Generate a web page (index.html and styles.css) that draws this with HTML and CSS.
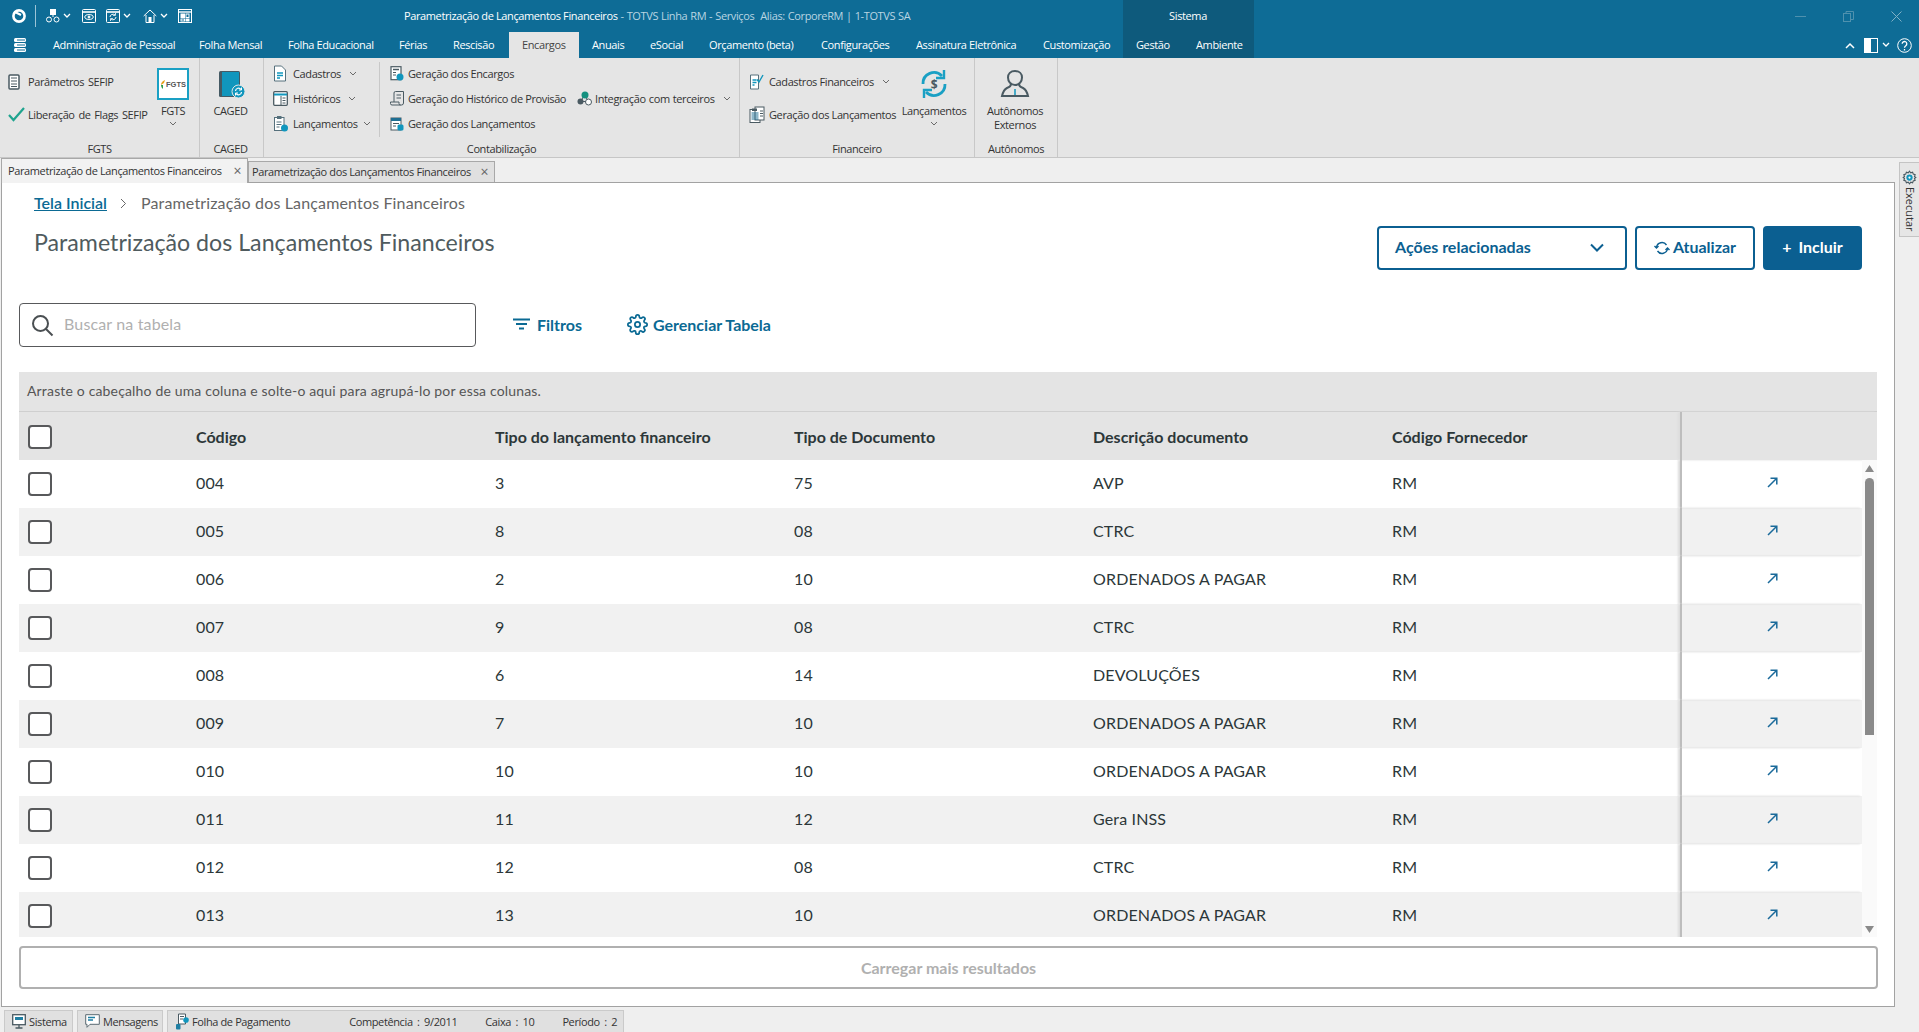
FILE: index.html
```html
<!DOCTYPE html>
<html lang="pt-BR">
<head>
<meta charset="utf-8">
<title>Parametrização de Lançamentos Financeiros</title>
<link rel="stylesheet" href="styles.css">
</head>
<body>
<header class="titlebar">
  <div class="quick">
    <svg width="16" height="16" viewBox="0 0 16 16"><circle cx="8" cy="8" r="5.6" fill="none" stroke="#fff" stroke-width="2.6"/><path d="M4 4l6 3" stroke="#fff" stroke-width="2"/></svg>
    <span class="q-sep"></span>
    <svg width="14" height="14" viewBox="0 0 14 14" fill="none" stroke="#fff"><rect x="4.5" y=".5" width="5" height="5" fill="#fff"/><circle cx="3" cy="10.5" r="2.5"/><circle cx="10.5" cy="10.5" r="2.5"/><path d="M7 5v3"/></svg>
    <svg class="chev" width="8" height="6" viewBox="0 0 8 6" fill="none" stroke="#fff" stroke-width="1.3"><path d="M1 1l3 3 3-3"/></svg>
    <svg class="q-gap" width="14" height="14" viewBox="0 0 14 14" fill="none" stroke="#fff"><rect x=".5" y=".5" width="13" height="13" rx="1"/><path d="M1 3h12" stroke-width="1.6"/><ellipse cx="7" cy="8" rx="4.2" ry="2.4"/><circle cx="7" cy="8" r="1" fill="#fff"/></svg>
    <svg class="q-gap2" width="14" height="14" viewBox="0 0 14 14" fill="none" stroke="#fff"><rect x=".5" y=".5" width="13" height="13" rx="1"/><path d="M1 3h12" stroke-width="1.6"/><path d="M4 8a3 3 0 0 1 5-2M10 8a3 3 0 0 1-5 2"/><path d="M9.5 4v2.400H7M4.500 12v-2.400H7" stroke-width=".8"/></svg>
    <svg class="chev" width="8" height="6" viewBox="0 0 8 6" fill="none" stroke="#fff" stroke-width="1.3"><path d="M1 1l3 3 3-3"/></svg>
    <svg class="q-gap3" width="14" height="14" viewBox="0 0 14 14" fill="none" stroke="#fff"><path d="M.7 7L7 1l6.300 6M3 6v7.500h8V6"/><rect x="5.500" y="8" width="3" height="5.500" fill="#fff" stroke="none"/></svg>
    <svg class="chev" width="8" height="6" viewBox="0 0 8 6" fill="none" stroke="#fff" stroke-width="1.3"><path d="M1 1l3 3 3-3"/></svg>
    <svg class="q-gap2" width="14" height="14" viewBox="0 0 14 14" fill="none" stroke="#fff"><rect x=".5" y=".5" width="13" height="13"/><path d="M1 3h12" stroke-width="1.400"/><rect x="3" y="5" width="3.500" height="3.500" fill="#fff"/><rect x="8" y="5" width="3" height="3.500"/><rect x="3" y="10" width="3.500" height="2"/><rect x="8" y="10" width="3" height="2" fill="#fff"/></svg>
  </div>
  <div class="doc-title"><b>Parametrização de Lançamentos Financeiros</b> - TOTVS Linha RM - Serviços&nbsp; Alias: CorporeRM | 1-TOTVS SA</div>
  <div class="context-name">Sistema</div>
  <div class="win-ctrls">
    <svg width="11" height="11" viewBox="0 0 11 11" stroke="#4f91ae" fill="none"><path d="M0 5.500h11"/></svg>
    <svg width="11" height="11" viewBox="0 0 11 11" stroke="#4f91ae" fill="none"><rect x=".5" y="2.500" width="7" height="8"/><path d="M3 2.500V.5h7.500v8h-3"/></svg>
    <svg width="11" height="11" viewBox="0 0 11 11" stroke="#7fb0c6" fill="none"><path d="M.5.5l10 10M10.500.5l-10 10"/></svg>
  </div>
</header>

<nav class="menubar">
  <div class="app-menu">
    <svg width="14" height="16" viewBox="0 0 14 16" fill="#fff"><rect x="1" y="1" width="12" height="4" rx="1.500"/><rect x="1" y="6" width="12" height="4" rx="1.500"/><rect x="1" y="11" width="12" height="4" rx="1.500"/><path d="M4 3h8M4 8h8M4 13h8" stroke="#0e6c96"/></svg>
  </div>
  <div class="tabs">
    <a class="tab">Administração de Pessoal</a>
    <a class="tab">Folha Mensal</a>
    <a class="tab">Folha Educacional</a>
    <a class="tab">Férias</a>
    <a class="tab">Rescisão</a>
    <a class="tab tab-on">Encargos</a>
    <a class="tab">Anuais</a>
    <a class="tab">eSocial</a>
    <a class="tab">Orçamento (beta)</a>
    <a class="tab">Configurações</a>
    <a class="tab">Assinatura Eletrônica</a>
    <a class="tab">Customização</a>
    <a class="tab tab-ctx">Gestão</a>
    <a class="tab tab-ctx">Ambiente</a>
  </div>
  <div class="menu-tools">
    <svg width="10" height="7" viewBox="0 0 10 7" fill="none" stroke="#fff" stroke-width="1.500"><path d="M1 6l4-4 4 4"/></svg>
    <svg class="t-panel" width="14" height="15" viewBox="0 0 14 15"><rect x=".5" y=".5" width="13" height="14" fill="none" stroke="#fff"/><rect x="1" y="1" width="6" height="13" fill="#fff"/></svg>
    <svg width="8" height="6" viewBox="0 0 8 6" fill="none" stroke="#fff" stroke-width="1.300"><path d="M1 1l3 3 3-3"/></svg>
    <svg class="t-help" width="15" height="15" viewBox="0 0 15 15" fill="none" stroke="#fff"><circle cx="7.500" cy="7.500" r="6.800"/><path d="M5.200 5.800a2.300 2.300 0 1 1 3.600 1.900c-.9.600-1.300 1-1.300 2.100" stroke-width="1.300"/><path d="M7.500 11v1.500" stroke-width="1.300"/></svg>
  </div>
</nav>

<section class="ribbon">
  <div class="group g-fgts">
    <div class="g-body">
      <div class="small-col s-fgts">
        <div class="item tall"><span class="slot"><svg width="12" height="16" viewBox="0 0 12 16"><rect x="1" y="1" width="10" height="14" rx="1" fill="#fff" stroke="#4a5a62" stroke-width="1.500"/><path d="M3 4h6M3 7h6M3 10h6M3 12.500h6" stroke="#4a5a62"/></svg></span>Parâmetros SEFIP</div>
        <div class="item tall"><span class="slot"><svg width="17" height="15" viewBox="0 0 17 15" fill="none" stroke="#1fa48f" stroke-width="2.200"><path d="M1 8l4.500 5L16 1"/></svg></span>Liberação de Flags SEFIP</div>
      </div>
      <div class="big b-fgts">
        <span class="fgts-logo"><svg width="6" height="11" viewBox="0 0 6 11"><path d="M5 1C2 2 1 4 1 6l3-2z" fill="#e8a11c"/><path d="M1 6c0 2 1 3 2 4V6z" fill="#2e9e4f"/></svg><span class="fgts-text">FGTS</span></span>
        <span class="big-label">FGTS</span>
        <svg class="r-chev" width="8" height="6" viewBox="0 0 8 6" fill="none" stroke="#6a6a6a"><path d="M1 1l3 3 3-3"/></svg>
      </div>
    </div>
    <div class="g-label">FGTS</div>
  </div>

  <div class="group g-caged">
    <div class="g-body">
      <div class="big b-caged">
        <span class="big-icon"><svg width="30" height="30" viewBox="0 0 30 30"><rect x="3" y="2" width="21" height="26" rx="1.500" fill="#455a64"/><rect x="6" y="3" width="17" height="24" fill="#1196bd"/><circle cx="22.500" cy="22.500" r="6.500" fill="#1196bd" stroke="#e5e5e5"/><path d="M19.500 22a3 3 0 0 1 5.500-1.500M25.500 23a3 3 0 0 1-5.500 1.500" fill="none" stroke="#fff" stroke-width="1.200"/><path d="M25.500 18.500v2.500h-2.500M19.500 26.500V24h2.500" fill="none" stroke="#fff"/></svg></span>
        <span class="big-label">CAGED</span>
      </div>
    </div>
    <div class="g-label">CAGED</div>
  </div>

  <div class="group g-cont">
    <div class="g-body">
      <div class="small-col s-c1">
        <div class="item"><span class="slot"><svg width="14" height="17" viewBox="0 0 14 17"><path d="M1.500 1h7l4 4v11h-11z" fill="#fff" stroke="#56707c"/><path d="M4 8h6M4 10.500h6M4 13h3" stroke="#1196bd" stroke-width="1.300"/></svg></span>Cadastros<svg class="chev-s" width="8" height="6" viewBox="0 0 8 6" fill="none" stroke="#6a6a6a"><path d="M1 1l3 3 3-3"/></svg></div>
        <div class="item"><span class="slot"><svg width="15" height="15" viewBox="0 0 15 15"><rect x=".7" y=".7" width="13.600" height="13.600" rx="1" fill="#fff" stroke="#4a5a62" stroke-width="1.300"/><path d="M1 3.500h13" stroke="#1196bd" stroke-width="2"/><path d="M8 5v9M9.500 7h3M9.500 9.500h3M9.500 12h3" stroke="#4a5a62"/></svg></span>Históricos<svg class="chev-s" width="8" height="6" viewBox="0 0 8 6" fill="none" stroke="#6a6a6a"><path d="M1 1l3 3 3-3"/></svg></div>
        <div class="item"><span class="slot"><svg width="15" height="17" viewBox="0 0 15 17"><rect x="1.500" y="2.500" width="9.500" height="13" fill="#fff" stroke="#56707c"/><rect x="4" y="1" width="4.500" height="3" fill="#56707c"/><path d="M3.500 7h5M3.500 9.500h5M3.500 12h3" stroke="#56707c"/><circle cx="11.500" cy="13" r="3.500" fill="#1196bd"/></svg></span>Lançamentos<svg class="chev-s c3" width="8" height="6" viewBox="0 0 8 6" fill="none" stroke="#6a6a6a"><path d="M1 1l3 3 3-3"/></svg></div>
      </div>
      <span class="v-sep"></span>
      <div class="small-col s-c2">
        <div class="item"><span class="slot s18"><svg width="14" height="15" viewBox="0 0 14 15"><rect x="1" y=".7" width="10" height="13" fill="#fff" stroke="#4a5a62" stroke-width="1.200"/><path d="M3 3.500h6" stroke="#4a5a62" stroke-width="1.500"/><path d="M3 6.500h3M3 9h3" stroke="#4a5a62"/><circle cx="10" cy="11" r="3.500" fill="#1196bd"/></svg></span>Geração dos Encargos</div>
        <div class="item"><span class="slot s18"><svg width="14" height="15" viewBox="0 0 14 15" fill="none" stroke="#4a5a62"><path d="M4 11V2a1.500 1.500 0 0 1 1.500-1.500h8V12a2 2 0 0 1-2 2H2a1.500 1.500 0 0 1-1.500-1.500V11H9v1.500a1.500 1.500 0 0 0 1.500 1.500"/><path d="M6.500 4h4.500M6.500 7h4.500"/></svg></span>Geração do Histórico de Provisão</div>
        <div class="item"><span class="slot s18"><svg width="14" height="14" viewBox="0 0 14 14"><rect x="1" y="1" width="10" height="12" fill="#fff" stroke="#4a5a62"/><rect x="1" y="1" width="10" height="3" fill="#1f6f93"/><path d="M3 6.500h6M3 9h3" stroke="#4a5a62"/><rect x="7.500" y="7.500" width="6" height="6" rx="1.500" fill="#1196bd"/></svg></span>Geração dos Lançamentos</div>
      </div>
      <div class="small-col s-c3">
        <div class="item"><span class="slot s18"><svg width="15" height="15" viewBox="0 0 15 15"><path d="M7.500 4L3.500 10.500h8z" fill="none" stroke="#4a5a62"/><circle cx="8" cy="4" r="3.500" fill="#14907f"/><circle cx="3.500" cy="10.500" r="3" fill="#4a5a62"/><circle cx="11.500" cy="11" r="3" fill="#fff" stroke="#4a5a62"/></svg></span>Integração com terceiros<svg class="chev-s" width="8" height="6" viewBox="0 0 8 6" fill="none" stroke="#6a6a6a"><path d="M1 1l3 3 3-3"/></svg></div>
      </div>
    </div>
    <div class="g-label">Contabilização</div>
  </div>

  <div class="group g-fin">
    <div class="g-body">
      <div class="small-col s-fin">
        <div class="item tall"><span class="slot"><svg width="15" height="17" viewBox="0 0 15 17"><path d="M1.500 2h8v14h-8z" fill="#fff" stroke="#56707c"/><path d="M3.500 7h4M3.500 9.500h4M3.500 12h2" stroke="#1196bd" stroke-width="1.300"/><path d="M8 6.500l2 2.500 4-7" fill="none" stroke="#1196bd" stroke-width="1.400"/></svg></span>Cadastros Financeiros<svg class="chev-s" width="8" height="6" viewBox="0 0 8 6" fill="none" stroke="#6a6a6a"><path d="M1 1l3 3 3-3"/></svg></div>
        <div class="item tall"><span class="slot"><svg width="16" height="17" viewBox="0 0 16 17"><rect x="1" y="3.500" width="10" height="13" fill="#fff" stroke="#4a5a62"/><rect x="6" y="1" width="9" height="13" fill="#fff" stroke="#4a5a62"/><rect x="3" y="2.500" width="5" height="2.500" fill="#4a5a62"/><path d="M2.500 7h7M2.500 9h7M2.500 11h7M2.500 13h7" stroke="#1f6f93"/><path d="M11 5h3M11 7.500h3M11 10h3" stroke="#4a5a62"/></svg></span>Geração dos Lançamentos</div>
      </div>
      <div class="big b-lanc">
        <span class="big-icon"><svg width="30" height="32" viewBox="0 0 30 32" fill="none" stroke="#1aa0c4" stroke-width="2.800"><path d="M4 16a11 11 0 0 1 19-8"/><path d="M26 16a11 11 0 0 1-19 8"/><path d="M25 2v8h-8M5 30v-8h8" stroke-width="2.400"/><text x="15" y="20.500" class="dollar">$</text></svg></span>
        <span class="big-label">Lançamentos</span>
        <svg class="r-chev" width="8" height="6" viewBox="0 0 8 6" fill="none" stroke="#6a6a6a"><path d="M1 1l3 3 3-3"/></svg>
      </div>
    </div>
    <div class="g-label">Financeiro</div>
  </div>

  <div class="group g-auto">
    <div class="g-body">
      <div class="big b-auto">
        <span class="big-icon"><svg width="30" height="30" viewBox="0 0 30 30" fill="none" stroke="#4a5a62" stroke-width="2"><path d="M15 2c-4.500 0-7 3-7 6.500S10.500 16 15 16s7-4 7-7.500S19.500 2 15 2z"/><path d="M11 15c0 2-1 3-4 4-3 1.500-4 4-5 8h26c-1-4-2-6.500-5-8-3-1-4-2-4-4"/><path d="M15 20v6" stroke="#1196bd" stroke-width="1.500"/></svg></span>
        <span class="big-label two-line">Autônomos<br>Externos</span>
      </div>
    </div>
    <div class="g-label">Autônomos</div>
  </div>
</section>

<div class="workspace">
  <div class="work-main">
    <div class="doc-tabs">
      <div class="doc-tab doc-on"><span>Parametrização de Lançamentos Financeiros</span><i class="x">×</i></div>
      <div class="doc-tab"><span>Parametrização dos Lançamentos Financeiros</span><i class="x">×</i></div>
    </div>
    <main class="panel">
      <div class="crumbs"><a class="crumb-link">Tela Inicial</a>
        <svg class="crumb-chev" width="7" height="11" viewBox="0 0 7 11" fill="none" stroke="#666"><path d="M1 1l4.500 4.500L1 10"/></svg>
        <span class="crumb-text">Parametrização dos Lançamentos Financeiros</span></div>
      <div class="page-head">
        <h1>Parametrização dos Lançamentos Financeiros</h1>
        <div class="actions">
          <button class="btn btn-select">Ações relacionadas<svg width="16" height="10" viewBox="0 0 16 10" fill="none" stroke="#0b5f91" stroke-width="2"><path d="M2 1.500l6 6 6-6"/></svg></button>
          <button class="btn btn-line"><svg width="16" height="16" viewBox="0 0 16 16" fill="none" stroke="#0b5f91" stroke-width="1.400"><path d="M2.500 7.500a5.500 5.500 0 0 1 10-2.500M13.500 8.500a5.500 5.500 0 0 1-10 2.500"/><path d="M.5 6l2 2 2-2M11.500 10l2-2 2 2"/></svg>Atualizar</button>
          <button class="btn btn-main">+<span>Incluir</span></button>
        </div>
      </div>
      <div class="toolbar">
        <div class="search">
          <svg width="23" height="23" viewBox="0 0 23 23" fill="none" stroke="#4a4f52" stroke-width="2"><circle cx="9.500" cy="9.500" r="7.500"/><path d="M15 15l6.500 6.500"/></svg>
          <span>Buscar na tabela</span>
        </div>
        <a class="tool t-filter"><svg width="17" height="12" viewBox="0 0 17 12" fill="none" stroke="#0b6a94" stroke-width="2"><path d="M0 1.500h17M3 6h11M6 10.500h5"/></svg>Filtros</a>
        <a class="tool t-manage"><svg width="21" height="21" viewBox="0 0 24 24" fill="none" stroke="#0b6a94" stroke-width="2"><circle cx="12" cy="12" r="3"/><path d="M19.400 15a1.700 1.700 0 0 0 .3 1.800l.1.1a2 2 0 1 1-2.900 2.900l-.1-.1a1.700 1.700 0 0 0-2.800 1.200V21a2 2 0 1 1-4 0v-.1a1.700 1.700 0 0 0-2.900-1.200l-.1.1a2 2 0 1 1-2.800-2.900l.1-.1a1.700 1.700 0 0 0-1.200-2.800H3a2 2 0 1 1 0-4h.1a1.700 1.700 0 0 0 1.200-2.900l-.1-.1a2 2 0 1 1 2.900-2.800l.1.1a1.700 1.700 0 0 0 1.800.3h.1a1.700 1.700 0 0 0 1-1.500V3a2 2 0 1 1 4 0v.1a1.700 1.700 0 0 0 2.900 1.200l.1-.1a2 2 0 1 1 2.800 2.900l-.1.1a1.700 1.700 0 0 0-.3 1.800v.1a1.700 1.700 0 0 0 1.500 1H21a2 2 0 1 1 0 4h-.1a1.700 1.700 0 0 0-1.500 1z"/></svg>Gerenciar Tabela</a>
      </div>
      <section class="grid">
        <div class="group-hint">Arraste o cabeçalho de uma coluna e solte-o aqui para agrupá-lo por essa colunas.</div>
        <div class="row head">
          <div class="c-check"><span class="cb"></span></div><div>Código</div><div>Tipo do lançamento financeiro</div><div>Tipo de Documento</div><div>Descrição documento</div><div>Código Fornecedor</div><div class="c-act"></div>
        </div>
        <div class="grid-body">
          <div class="rows">
            <div class="row"><div class="c-check"><span class="cb"></span></div><div>004</div><div>3</div><div>75</div><div>AVP</div><div>RM</div><div class="c-act"><svg width="11" height="11" viewBox="0 0 11 11" fill="none" stroke="#1a6a9a" stroke-width="1.500"><path d="M1 10l8.500-8.500M3.500 1.200h6.300v6.300"/></svg></div></div>
            <div class="row"><div class="c-check"><span class="cb"></span></div><div>005</div><div>8</div><div>08</div><div>CTRC</div><div>RM</div><div class="c-act"><svg width="11" height="11" viewBox="0 0 11 11" fill="none" stroke="#1a6a9a" stroke-width="1.500"><path d="M1 10l8.500-8.500M3.500 1.200h6.300v6.300"/></svg></div></div>
            <div class="row"><div class="c-check"><span class="cb"></span></div><div>006</div><div>2</div><div>10</div><div>ORDENADOS A PAGAR</div><div>RM</div><div class="c-act"><svg width="11" height="11" viewBox="0 0 11 11" fill="none" stroke="#1a6a9a" stroke-width="1.500"><path d="M1 10l8.500-8.500M3.500 1.200h6.300v6.300"/></svg></div></div>
            <div class="row"><div class="c-check"><span class="cb"></span></div><div>007</div><div>9</div><div>08</div><div>CTRC</div><div>RM</div><div class="c-act"><svg width="11" height="11" viewBox="0 0 11 11" fill="none" stroke="#1a6a9a" stroke-width="1.500"><path d="M1 10l8.500-8.500M3.500 1.200h6.300v6.300"/></svg></div></div>
            <div class="row"><div class="c-check"><span class="cb"></span></div><div>008</div><div>6</div><div>14</div><div>DEVOLUÇÕES</div><div>RM</div><div class="c-act"><svg width="11" height="11" viewBox="0 0 11 11" fill="none" stroke="#1a6a9a" stroke-width="1.500"><path d="M1 10l8.500-8.500M3.500 1.200h6.300v6.300"/></svg></div></div>
            <div class="row"><div class="c-check"><span class="cb"></span></div><div>009</div><div>7</div><div>10</div><div>ORDENADOS A PAGAR</div><div>RM</div><div class="c-act"><svg width="11" height="11" viewBox="0 0 11 11" fill="none" stroke="#1a6a9a" stroke-width="1.500"><path d="M1 10l8.500-8.500M3.500 1.200h6.300v6.300"/></svg></div></div>
            <div class="row"><div class="c-check"><span class="cb"></span></div><div>010</div><div>10</div><div>10</div><div>ORDENADOS A PAGAR</div><div>RM</div><div class="c-act"><svg width="11" height="11" viewBox="0 0 11 11" fill="none" stroke="#1a6a9a" stroke-width="1.500"><path d="M1 10l8.500-8.500M3.500 1.200h6.300v6.300"/></svg></div></div>
            <div class="row"><div class="c-check"><span class="cb"></span></div><div>011</div><div>11</div><div>12</div><div>Gera INSS</div><div>RM</div><div class="c-act"><svg width="11" height="11" viewBox="0 0 11 11" fill="none" stroke="#1a6a9a" stroke-width="1.500"><path d="M1 10l8.500-8.500M3.500 1.200h6.300v6.300"/></svg></div></div>
            <div class="row"><div class="c-check"><span class="cb"></span></div><div>012</div><div>12</div><div>08</div><div>CTRC</div><div>RM</div><div class="c-act"><svg width="11" height="11" viewBox="0 0 11 11" fill="none" stroke="#1a6a9a" stroke-width="1.500"><path d="M1 10l8.500-8.500M3.500 1.200h6.300v6.300"/></svg></div></div>
            <div class="row"><div class="c-check"><span class="cb"></span></div><div>013</div><div>13</div><div>10</div><div>ORDENADOS A PAGAR</div><div>RM</div><div class="c-act"><svg width="11" height="11" viewBox="0 0 11 11" fill="none" stroke="#1a6a9a" stroke-width="1.500"><path d="M1 10l8.500-8.500M3.500 1.200h6.300v6.300"/></svg></div></div>
          </div>
          <div class="vscroll">
            <svg width="9" height="7" viewBox="0 0 9 7" fill="#8a8a8a"><path d="M4.500 0L9 7H0z"/></svg>
            <span class="thumb"></span>
            <svg class="sc-down" width="9" height="7" viewBox="0 0 9 7" fill="#8a8a8a"><path d="M4.500 7L0 0h9z"/></svg>
          </div>
        </div>
      </section>
      <button class="load-more">Carregar mais resultados</button>
    </main>
  </div>
  <aside class="side">
    <div class="side-tab">
      <svg width="15" height="15" viewBox="0 0 24 24"><path d="M12 2l2 2.500 3-1 1 3 3 1-1 3L22 12l-2 1.500 1 3-3 1-1 3-3-1-2 2.500-2-2.500-3 1-1-3-3-1 1-3L2 12l2-1.500-1-3 3-1 1-3 3 1z" fill="none" stroke="#4a5a62" stroke-width="1.800"/><circle cx="12" cy="12" r="5" fill="#1196bd"/><circle cx="12" cy="12" r="1.800" fill="#fff"/></svg>
      <span>Executar</span>
    </div>
  </aside>
</div>

<footer class="status">
  <div class="st-btn st-a"><svg width="14" height="15" viewBox="0 0 14 15"><rect x=".7" y=".7" width="12.600" height="10" fill="#fff" stroke="#4a5a62" stroke-width="1.300"/><rect x="3" y="3" width="8" height="3" fill="#1f7fa3"/><path d="M7 11v3M3.500 14h7" stroke="#4a5a62" stroke-width="1.300"/></svg><span>Sistema</span></div>
  <div class="st-btn st-b"><svg width="15" height="14" viewBox="0 0 15 14"><path d="M.7.7h13.600v9.600H5l-3 3v-3H.7z" fill="#fff" stroke="#5a6a72"/><path d="M3 3.500h7M3 6h5" stroke="#1f7fa3" stroke-width="1.400"/></svg><span>Mensagens</span></div>
  <div class="st-btn st-c"><svg width="14" height="17" viewBox="0 0 14 17"><path d="M3.500 1h7v10h-7z" fill="#fff" stroke="#4a5a62"/><path d="M5 3.500h4M5 6h3" stroke="#4a5a62"/><rect x="1" y="11" width="4.500" height="5.500" rx="1" fill="#1f7fa3"/><circle cx="11" cy="7" r="2.800" fill="#1196bd"/></svg><span>Folha de Pagamento</span><span class="st-info st-comp">Competência : 9/2011</span><span class="st-info">Caixa : 10</span><span class="st-info">Período : 2</span></div>
</footer>
</body>
</html>
```
FILE: styles.css
```css
* { box-sizing: border-box; }
html, body { margin: 0; height: 100%; }
body {
  width: 1919px; height: 1032px; overflow: hidden;
  display: flex; flex-direction: column;
  font-family: "Open Sans", "Noto Sans", sans-serif; font-size: 11px; letter-spacing: -.38px; color: #333;
  background: #efefef;
}
svg { display: block; flex: none; }

/* title bar */
.titlebar {
  height: 32px; flex: none; background: #0e6c96; color: #b9d5e2;
  display: grid; grid-template-columns: 404px 719px 131px 1fr; align-items: stretch;
}
.quick { display: flex; align-items: center; padding-left: 11px; }
.q-sep { width: 1px; height: 22px; background: #9cc4d6; margin: 0 10px 0 8px; }
.chev { margin-left: 3px; }
.q-gap { margin-left: 11px; }
.q-gap2 { margin-left: 10px; }
.q-gap3 { margin-left: 12px; }
.doc-title { line-height: 32px; white-space: pre; word-spacing: .5px; }
.doc-title b { color: #fff; font-weight: 400; word-spacing: 0; }
.context-name { background: #0e5a7c; color: #fff; text-align: center; line-height: 32px; padding-right: 1px; }
.win-ctrls { display: flex; justify-content: flex-end; align-items: center; gap: 37px; padding-right: 17px; }

/* menu tabs */
.menubar { height: 26px; flex: none; background: #0e6c96; display: flex; color: #fff; }
.app-menu { width: 40px; display: flex; align-items: center; padding-left: 13px; }
.tabs { display: grid; grid-template-columns: 146px 89px 111px 54px 69px 70px 58px 59px 112px 95px 127px 93px 60px 71px; width: 1214px; }
.tab { padding-left: 13px; line-height: 26px; white-space: nowrap; }
.tab-on { background: #e5e5e5; color: #444; }
.tab-ctx { background: #0e5a7c; }
.menu-tools { flex: 1; display: flex; align-items: center; padding-left: 591px; }
.t-panel { margin-left: 9px; }
.menu-tools svg:nth-child(3) { margin-left: 4px; }
.t-help { margin-left: 7px; }

/* ribbon */
.ribbon { height: 100px; flex: none; background: #e5e5e5; border-bottom: 1px solid #c6c6c6; display: flex; }
.group { display: flex; flex-direction: column; border-right: 1px solid #c8c8c8; height: 99px; }
.g-fgts { width: 200px; }
.g-caged { width: 64px; }
.g-cont { width: 476px; }
.g-fin { width: 235px; }
.g-auto { width: 83px; }
.g-body { flex: 1; display: flex; }
.g-label { height: 17px; line-height: 17px; text-align: center; color: #333; }
.g-caged .g-label { padding-right: 2px; }
.small-col { display: flex; flex-direction: column; padding-top: 3px; }
.item { height: 25px; display: flex; align-items: center; white-space: nowrap; }
.item.tall { height: 33px; }
.slot { width: 20px; flex: none; display: flex; align-items: center; }
.slot.s18 { width: 18px; }
.s-fgts { width: 149px; padding: 7px 0 0 8px; word-spacing: 1.300px; }
.s-c1 { width: 115px; padding-left: 9px; }
.s-c2 { width: 197px; padding-left: 10px; }
.s-c3 { padding-top: 28px; word-spacing: .6px; }
.s-fin { width: 158px; padding: 7px 0 0 9px; }
.v-sep { width: 1px; height: 75px; background: #c8c8c8; margin-top: 4px; flex: none; }
.chev-s { margin-left: 8px; }
.c3 { margin-left: 5px; }
.big { display: flex; flex-direction: column; align-items: center; padding-top: 10px; line-height: 16px; text-align: center; }
.big-icon { height: 32px; display: flex; align-items: center; }
.big-label { margin-top: 3px; white-space: nowrap; }
.two-line { line-height: 14px; margin-top: 4px; }
.r-chev { margin-top: 2px; }
.b-fgts { width: 48px; }
.b-caged { width: 61px; }
.b-lanc { width: 72px; }
.b-auto { width: 80px; }
.fgts-logo { width: 32px; height: 32px; background: #fff; border: 2px solid #1aa0c4; display: flex; align-items: center; justify-content: center; }
.fgts-text { font: 700 7.5px "Liberation Sans", sans-serif; letter-spacing: 0; color: #555; }
.dollar { font: 700 12px "Open Sans", sans-serif; text-anchor: middle; fill: #4a5a62; stroke: none; }

/* workspace */
.workspace { height: 849px; flex: none; display: flex; }
.work-main { width: 1895px; display: flex; flex-direction: column; }
.doc-tabs { height: 24px; flex: none; display: flex; align-items: flex-end; padding-left: 1px; position: relative; z-index: 1; }
.doc-tab {
  width: 247px; height: 21px; padding: 0 0 2px 3px; display: flex; align-items: center;
  background: #e0e0e0; border: 1px solid #a8a8a8; border-bottom: 0; white-space: nowrap;
}
.doc-on { height: 25px; margin-bottom: -1px; background: #f2f2f2; padding: 0 0 2px 6px; }
.x { font-style: normal; font-size: 14px; color: #666; margin-left: auto; margin-right: 6px; }
.side { flex: 1; background: #efefef; padding: 4px 0 0 4px; }
.side-tab {
  height: 75px; background: #e6e6e6; border: 1px solid #c4c4c4; border-right: 0;
  display: flex; flex-direction: column; align-items: center; padding-top: 7px; gap: 2px; color: #333; letter-spacing: 0;
}
.side-tab span { writing-mode: vertical-rl; line-height: 14px; }

/* panel */
.panel {
  flex: 1; background: #fff; border: 1px solid #a2a2a2; margin-left: 1px; padding: 9px 15px 0 17px;
  font-family: Lato, "Open Sans", sans-serif; font-size: 16px; letter-spacing: 0; color: #2c3739;
  display: flex; flex-direction: column;
}
.crumbs { height: 22px; line-height: 22px; display: flex; align-items: center; padding-left: 15px; color: #666; }
.crumb-link { color: #0b6a94; text-decoration: underline; font-weight: 600; }
.crumb-chev { margin: 0 14px 0 13px; }
.crumb-text { letter-spacing: .15px; }
.page-head { display: flex; justify-content: space-between; align-items: flex-start; height: 44px; margin-top: 12px; padding: 0 17px 0 15px; }
h1 { margin: 0; font-size: 23.2px; font-weight: 400; line-height: 32px; color: #4f5b5e; }
.actions { display: flex; gap: 8px; }
.btn {
  height: 44px; border: 2px solid #0b5f91; border-radius: 4px; background: #fff; color: #0b5f91;
  font: 700 16px Lato, sans-serif; display: flex; align-items: center; padding: 0 0 3px;
}
.btn svg { margin-top: 3px; }
.btn-select { width: 250px; justify-content: space-between; padding: 0 20px 3px 16px; }
.btn-line { width: 120px; justify-content: center; gap: 3px; }
.btn-main { width: 99px; justify-content: center; gap: 7px; background: #0b5f91; color: #fff; }
.toolbar { display: flex; align-items: center; height: 44px; margin-top: 33px; }
.search {
  width: 457px; height: 44px; border: 1px solid #58595b; border-radius: 4px; display: flex; align-items: center;
  padding: 0 0 3px 11px; gap: 10px; color: #b0b0b0; letter-spacing: .15px;
}
.search svg { margin-top: 3px; }
.tool { display: flex; align-items: center; color: #0b6a94; font-weight: 700; padding-bottom: 2px; }
.t-filter { margin-left: 37px; gap: 7px; }
.t-manage { margin-left: 45px; gap: 5px; }

/* grid */
.grid { margin-top: 25px; width: 1858px; }
.group-hint { height: 40px; line-height: 38px; padding-left: 8px; background: #e4e4e4; font-size: 14px; letter-spacing: .16px; color: #555; border-bottom: 1px solid #cfcfcf; }
.row { display: grid; grid-template-columns: 169px 299px 299px 299px 299px 296px 1fr; height: 48px; align-items: center; letter-spacing: .15px; }
.row > div { padding: 0 0 3px 8px; white-space: nowrap; }
.head { background: #e4e4e4; font-weight: 700; letter-spacing: 0; }
.head > div { padding-bottom: 0; }
.grid-body { display: flex; height: 477px; overflow: hidden; }
.rows { flex: 1; }
.rows .row:nth-child(even) { background: #f1f1f1; }
.row > .c-check { padding: 0 0 0 9px; display: flex; align-items: center; }
.head > .c-check { padding-top: 2px; }
.row > .c-act {
  height: 100%; padding: 0; display: flex; align-items: center; justify-content: center;
  border-left: 2px solid #bdbdbd; box-shadow: -2px 0 2px #dcdcdc;
}
.cb { width: 24px; height: 24px; border: 2px solid #58595b; border-radius: 4px; background: #fff; display: block; }
.c-act svg { margin-top: -3px; }
.vscroll { width: 15px; height: 477px; background: #fafafa; display: flex; flex-direction: column; align-items: center; padding-top: 5px; }
.thumb { width: 9px; height: 257px; background: #8a8a8a; border-radius: 5px 5px 0 0; margin-top: 6px; }
.sc-down { margin-top: auto; margin-bottom: 4px; }
.load-more {
  width: 1859px; height: 43px; margin-top: 9px; border: 2px solid #b0b0b0; border-radius: 4px; background: #fff;
  color: #b0b0b0; font: 700 16px Lato, sans-serif;
}

/* status bar */
.status { height: 25px; flex: none; display: flex; padding: 3px 0 0 4px; gap: 4px; }
.st-btn { height: 22px; display: flex; align-items: center; background: #e0e0e0; border: 1px solid #cacaca; border-bottom: 0; gap: 3px; white-space: nowrap; padding-bottom: 1px; }
.st-a { width: 69px; padding-left: 7px; }
.st-b { width: 86px; padding-left: 7px; }
.st-c { width: 457px; padding-left: 7px; }
.st-info { margin-left: 25px; word-spacing: 2px; }
.st-comp { margin-left: 56px; }
```
